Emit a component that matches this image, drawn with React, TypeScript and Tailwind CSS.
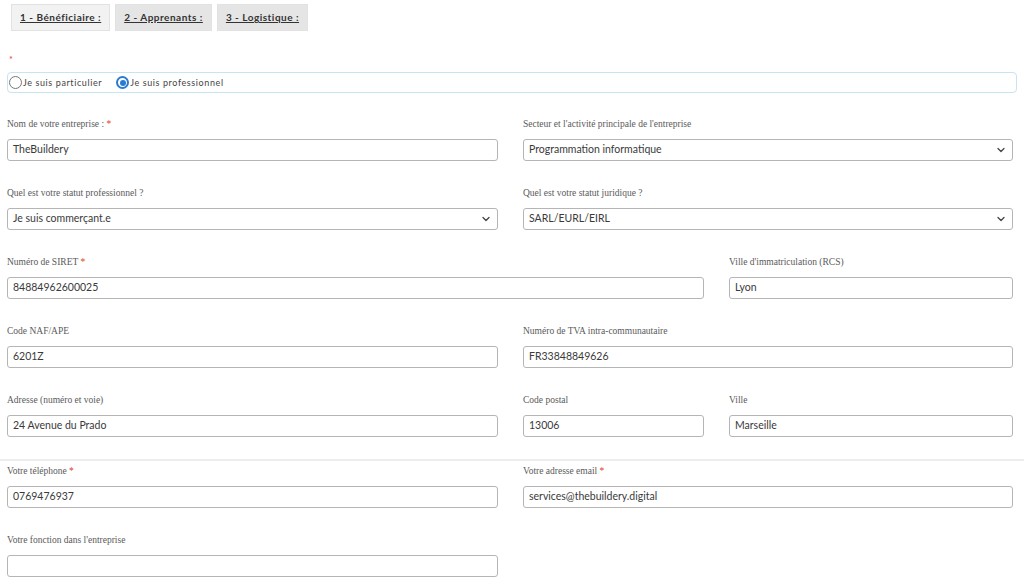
const Chevron = () => (
  <svg width="10" height="10" viewBox="0 0 10 10" className="shrink-0">
    <path d="M2 3.5 L5 6.5 L8 3.5" fill="none" stroke="#444" strokeWidth="1.3" strokeLinecap="round" strokeLinejoin="round" />
  </svg>
);

const Field = ({
  label,
  value,
  required,
  select,
  className,
}: {
  label: string;
  value?: string;
  required?: boolean;
  select?: boolean;
  className?: string;
}) => (
  <div className={className}>
    <div className="h-[14px] leading-[14px] mb-[8px] text-[9.5px] text-[#5a5a5a] font-['Liberation_Serif',serif]">
      {label}
      {required && <span className="text-[#e2401c]"> *</span>}
    </div>
    <div className="h-[22px] border border-[#b5b5b5] rounded-[3px] bg-white flex items-center justify-between pl-[5px] pr-[6px] text-[10.5px] text-[#3a3a3a] font-['Lato',sans-serif]">
      <span>{value}</span>
      {select && <Chevron />}
    </div>
  </div>
);

const Tab = ({ label, active }: { label: string; active?: boolean }) => (
  <div
    className={
      "h-[27px] flex items-center px-[8px] border border-[#e2e2e2] text-[10px] font-bold tracking-[0.5px] underline text-[#333] font-['Lato',sans-serif] " +
      (active ? "bg-[#f2f2f2]" : "bg-[#e5e5e5]")
    }
  >
    {label}
  </div>
);

const Radio = ({ label, checked }: { label: string; checked?: boolean }) => (
  <label className="flex items-center gap-[1px]">
    {checked ? (
      <span className="w-[13px] h-[13px] rounded-full border-[2px] border-[#2a7ad0] flex items-center justify-center">
        <span className="w-[6px] h-[6px] rounded-full bg-[#2a7ad0]" />
      </span>
    ) : (
      <span className="w-[13px] h-[13px] rounded-full border border-[#777] bg-white" />
    )}
    <span className="text-[9px] tracking-[0.6px] text-[#444]">{label}</span>
  </label>
);

export default function App() {
  return (
    <div className="w-[1024px] h-[587px] bg-white overflow-hidden font-['Lato',sans-serif]">
      <div className="flex gap-[5px] pl-[11px] pt-[4px]">
        <Tab label="1 - Bénéficiaire :" active />
        <Tab label="2 - Apprenants :" />
        <Tab label="3 - Logistique :" />
      </div>

      <div className="px-[7px]">
        <div className="mt-[24px] pl-[2px] h-[10px] text-[9px] leading-[10px] text-[#e2401c]">*</div>
        <div className="mt-[7px] h-[21px] border border-[#c6e4f2] rounded-[4px] flex items-center gap-[14px] pl-[1px]">
          <Radio label="Je suis particulier" />
          <Radio label="Je suis professionnel" checked />
        </div>

        <div className="mt-[24px] grid grid-cols-[491px_181px_284px] gap-x-[25px] gap-y-[25px]">
          <Field label="Nom de votre entreprise :" required value="TheBuildery" />
          <Field className="col-span-2" label="Secteur et l'activité principale de l'entreprise" value="Programmation informatique" select />

          <Field label="Quel est votre statut professionnel ?" value="Je suis commerçant.e" select />
          <Field className="col-span-2" label="Quel est votre statut juridique ?" value="SARL/EURL/EIRL" select />

          <Field className="col-span-2" label="Numéro de SIRET" required value="84884962600025" />
          <Field label="Ville d'immatriculation (RCS)" value="Lyon" />

          <Field label="Code NAF/APE" value="6201Z" />
          <Field className="col-span-2" label="Numéro de TVA intra-communautaire" value="FR33848849626" />

          <Field label="Adresse (numéro et voie)" value="24 Avenue du Prado" />
          <Field label="Code postal" value="13006" />
          <Field label="Ville" value="Marseille" />
        </div>
      </div>

      <div className="mt-[22px] border-t-[2px] border-[#eeeeee] pt-[3px] px-[7px]">
        <div className="grid grid-cols-[491px_490px] gap-x-[25px] gap-y-[25px]">
          <Field label="Votre téléphone" required value="0769476937" />
          <Field label="Votre adresse email" required value="services@thebuildery.digital" />
          <Field label="Votre fonction dans l'entreprise" value="" />
        </div>
      </div>
    </div>
  );
}
